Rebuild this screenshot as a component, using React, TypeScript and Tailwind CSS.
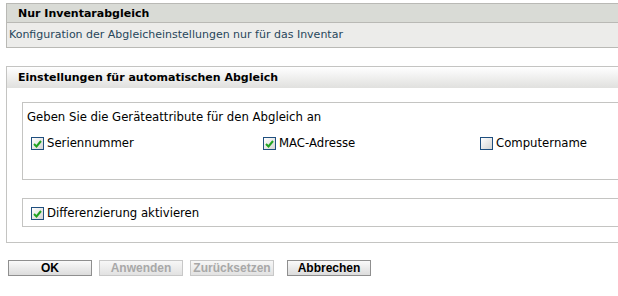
import React from "react";

function Check({ checked, label }: { checked: boolean; label: string }) {
  return (
    <label className="flex items-center gap-[3px]">
      <span className="flex h-[13px] w-[13px] items-center justify-center border border-[#1f4f7f] bg-gradient-to-br from-white to-[#d4d4d2]">
        {checked && (
          <svg width="9" height="8" viewBox="0 0 9 8">
            <path d="M1 4 L3.5 6.5 L8 1" fill="none" stroke="#21a321" strokeWidth="2" />
          </svg>
        )}
      </span>
      <span>{label}</span>
    </label>
  );
}

function Btn({ label, disabled, className = "" }: { label: string; disabled?: boolean; className?: string }) {
  return (
    <button
      className={
        (disabled
          ? "h-[16px] w-[84px] border border-[#c8c8c8] bg-gradient-to-b from-[#f7f7f7] to-[#e2e2e2] text-[12px] font-bold leading-none text-[#a8a8a8] "
          : "h-[16px] w-[84px] border border-[#8f8f8f] bg-gradient-to-b from-[#fafafa] to-[#dcdcdc] text-[12px] font-bold leading-none text-black ") +
        className
      }
      style={{ fontFamily: '"Liberation Sans", Arial, sans-serif' }}
    >
      {label}
    </button>
  );
}

export default function App() {
  return (
    <div
      className="h-[296px] w-[618px] overflow-hidden bg-white pl-[6px] pt-[3px] text-[11.7px] text-black"
      style={{ fontFamily: '"DejaVu Sans", Verdana, sans-serif' }}
    >
      <div className="border-y border-l border-[#b9b9b5]">
        <div className="h-[19px] border-b border-[#b9b9b5] bg-[#d9dbd6] pl-[11px] text-[11px] font-bold leading-[19px]">
          Nur Inventarabgleich
        </div>
        <div className="h-[24px] bg-[#ececea] pl-[2px] text-[11px] leading-[24px] text-[#27465a]">
          Konfiguration der Abgleicheinstellungen nur für das Inventar
        </div>
      </div>

      <div className="mt-[18px] border-y border-l border-[#c4c4c2]">
        <div className="h-[21px] bg-gradient-to-b from-white to-[#e0e0de] pl-[11px] text-[11px] font-bold leading-[21px]">
          Einstellungen für automatischen Abgleich
        </div>
        <div className="pb-[15px] pl-[15px] pt-[14px]">
          <div className="h-[78px] border-y border-l border-[#c4c4c2] pl-[4px] pt-[6px]">
            <div className="leading-[16px]">Geben Sie die Geräteattribute für den Abgleich an</div>
            <div className="mt-[10px] grid grid-cols-[232px_217px_auto] pl-[4px]">
              <Check checked label="Seriennummer" />
              <Check checked label="MAC-Adresse" />
              <Check checked={false} label="Computername" />
            </div>
          </div>
          <div className="mt-[18px] h-[29px] border-y border-l border-[#c4c4c2] pl-[8px] pt-[6px]">
            <Check checked label="Differenzierung aktivieren" />
          </div>
        </div>
      </div>

      <div className="mt-[17px] flex gap-[7px] pl-[2px]">
        <Btn label="OK" />
        <Btn label="Anwenden" disabled />
        <Btn label="Zurücksetzen" disabled />
        <Btn label="Abbrechen" className="ml-[6px]" />
      </div>
    </div>
  );
}
